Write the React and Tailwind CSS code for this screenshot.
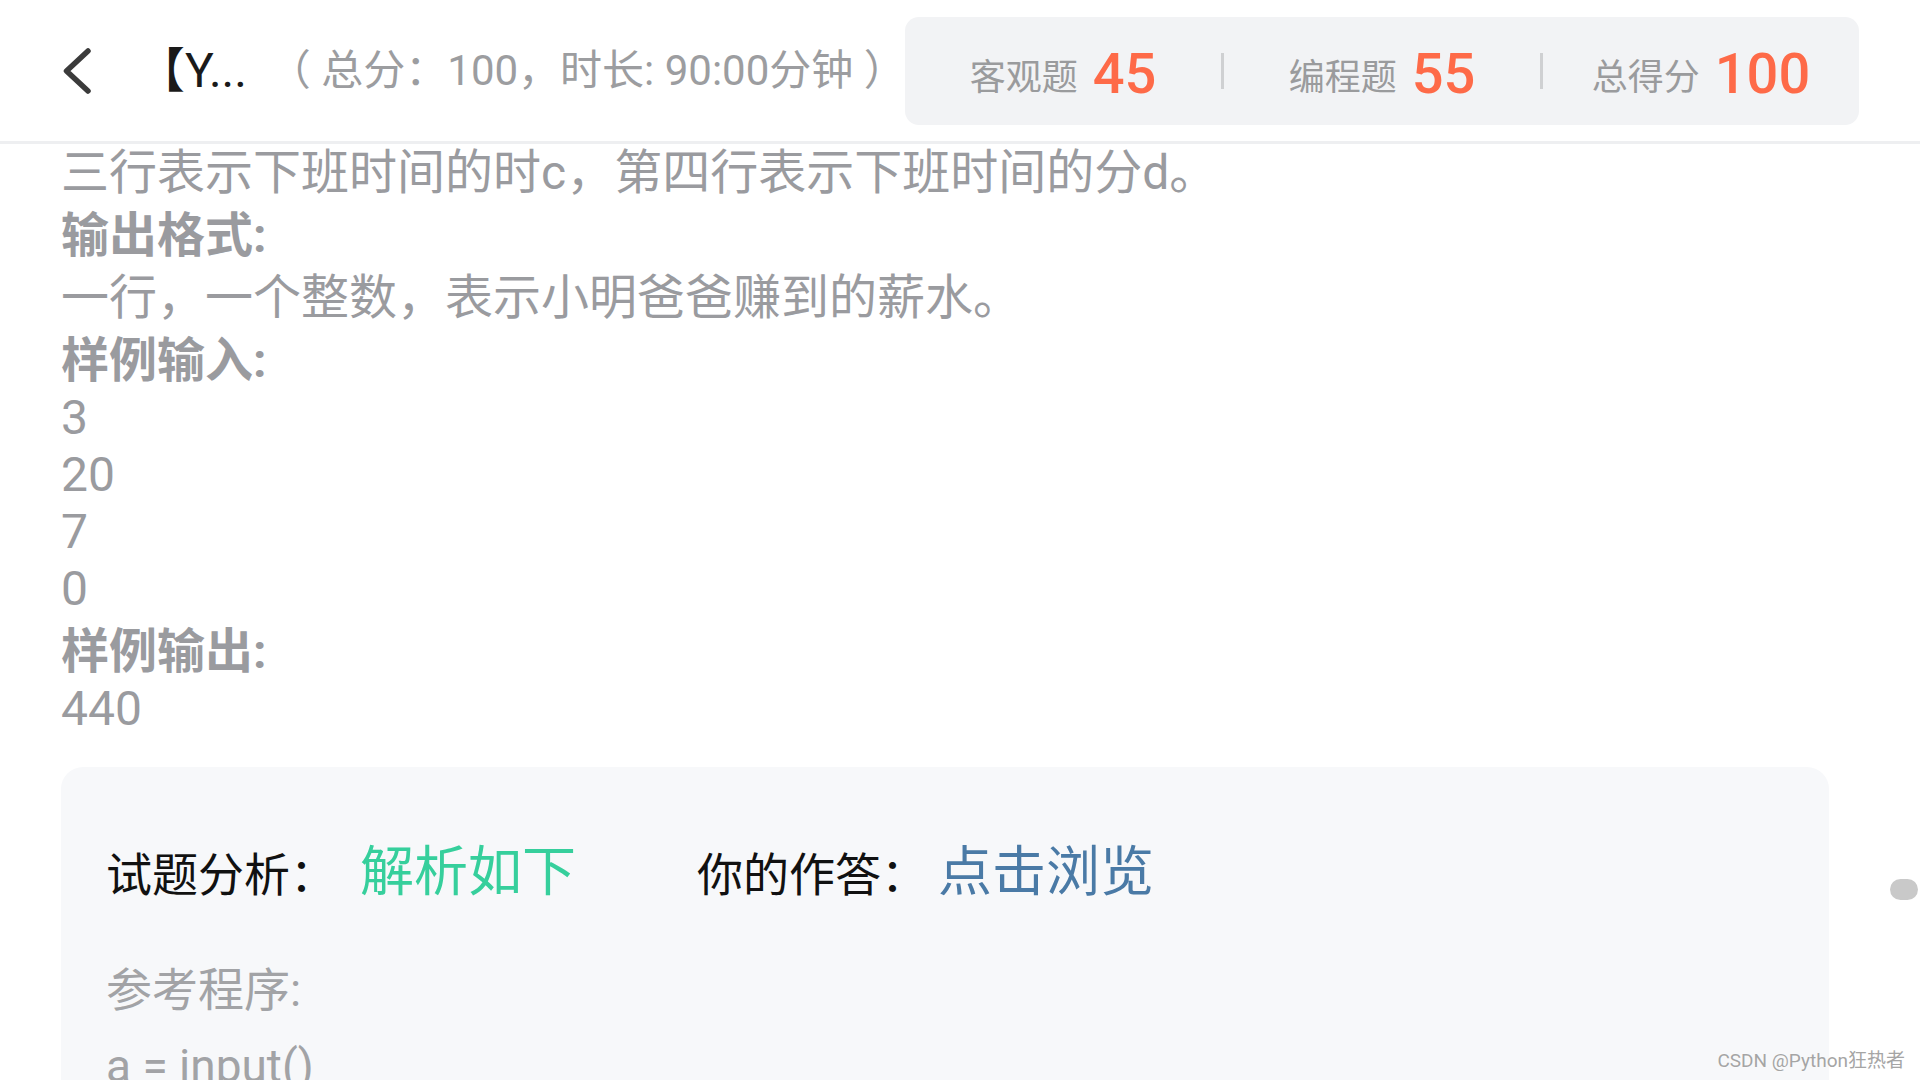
import React from 'react';

const bodyLines = [
  { text: '三行表示下班时间的时c，第四行表示下班时间的分d。' },
  { text: '输出格式:', heading: true },
  { text: '一行，一个整数，表示小明爸爸赚到的薪水。', gap: true },
  { text: '样例输入:', heading: true },
  { text: '3' },
  { text: '20' },
  { text: '7' },
  { text: '0' },
  { text: '样例输出:', heading: true },
  { text: '440' },
];

const scores = [
  { label: '客观题', value: 45 },
  { label: '编程题', value: 55 },
  { label: '总得分', value: 100 },
];

const BackIcon = () => (
  <svg width="28" height="46" viewBox="0 0 28 46" fill="none">
    <path
      d="M25 3 L3.5 23 L25 43"
      stroke="#3b3b3b"
      strokeWidth="5.5"
      strokeLinecap="round"
      strokeLinejoin="round"
    />
  </svg>
);

const ScoreBox = () => (
  <div className="ml-auto mr-[61px] flex h-[108px] w-[955px] items-center rounded-[14px] bg-[#f2f3f5]">
    {scores.map((item, index) => (
      <React.Fragment key={item.label}>
        {index > 0 && <div className="h-[36px] w-[3px] bg-[#cfd0d2]" />}
        <div className="flex flex-1 items-baseline justify-center pt-[6px]">
          <span className="text-[36px] text-[#9a9b9d]">{item.label}</span>
          <span className="ml-[15px] translate-y-[3px] text-[56px] font-medium leading-none text-[#fe6a48]">
            {item.value}
          </span>
        </div>
      </React.Fragment>
    ))}
  </div>
);

export default function App() {
  return (
    <div className="relative h-[1080px] w-[1920px] overflow-hidden bg-white font-['Roboto','Noto_Sans_CJK_SC',sans-serif]">
      {/* Header */}
      <div className="flex h-[144px] items-center border-b-[3px] border-[#eeeff1]">
        <div className="ml-[63px] flex items-center">
          <BackIcon />
        </div>
        <span className="ml-[46px] text-[48px] text-[#1a1a1a]">【Y...</span>
        <span className="ml-[22px] text-[42px] text-[#9c9da0]">（ 总分：100，时长: 90:00分钟 ）</span>
        <ScoreBox />
      </div>

      {/* Problem text */}
      <div className="pl-[61px]">
        {bodyLines.map((line, index) => (
          <div
            key={index}
            className={`text-[48px] leading-[57px] text-[#9a9b9f] ${line.heading ? 'mt-[6px] font-bold' : ''} ${line.gap ? 'mt-[5px]' : ''}`}
          >
            {line.text}
          </div>
        ))}
      </div>

      {/* Analysis card */}
      <div className="ml-[61px] mt-[30px] h-[400px] w-[1768px] rounded-[22px] bg-[#f7f8fa] pl-[45px] pt-[76px]">
        <div className="flex items-baseline leading-[60px]">
          <span className="text-[46px] text-[#111111]">试题分析：</span>
          <span className="ml-[24px] text-[54px] text-[#36cf9c]">解析如下</span>
          <span className="ml-[121px] text-[46px] text-[#111111]">你的作答：</span>
          <span className="ml-[11px] text-[54px] text-[#4a7aa6]">点击浏览</span>
        </div>
        <div className="mt-[56px] text-[46px] leading-[58px] text-[#a2a3a6]">参考程序:</div>
        <div className="mt-[18px] text-[46px] leading-[58px] text-[#a2a3a6]">a = input()</div>
      </div>

      {/* Scroll indicator */}
      <div className="absolute right-[2px] top-[879px] h-[21px] w-[28px] rounded-full bg-[#c9c9c9]" />

      {/* Watermark */}
      <div className="absolute bottom-[5px] right-[15px] text-[19px] text-[#a5a5a5] [text-shadow:0_0_2px_#ffffff]">
        CSDN @Python狂热者
      </div>
    </div>
  );
}
